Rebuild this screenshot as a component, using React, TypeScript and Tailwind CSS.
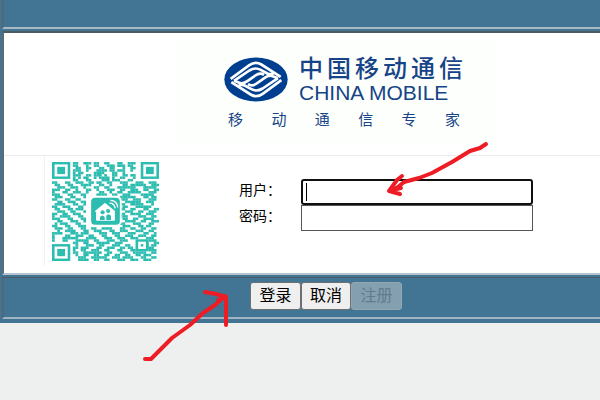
const qrRows = [
  "00000000110011101100110001100111000000000",
  "00000000110001001100011101110110000000000",
  "00000000011001100011001100010011000000000",
  "00000000111001000111101101110010000000000",
  "00000000101100001111000110010000000000000",
  "00000000111001101110100110011011000000000",
  "00000000101011001011110100110001000000000",
  "00000000110001100001110111000110000000000",
  "11000110011100110110011000111000111001110",
  "01100011000111100011001000011011111100111",
  "00111001110010001100110001111111000111110",
  "11100110010001100100011100110011100110011",
  "10001100111001000011001001100111110001110",
  "11100011000110000111100110011100001111100",
  "01110001100010000000000000111111000110110",
  "11000110011000000000000000111001110001110",
  "00110011100110000000000000001111110011100",
  "01111000110010000000000000110011111000100",
  "11001110001100000000000000011000111111000",
  "01100011011100000000000000110011000110011",
  "00111001100010000000000000001110011001110",
  "11001100111000000000000000110011110011100",
  "10011110001100000000000000111000011100110",
  "11100011000110000000000000011001100111100",
  "00110001110010000000000000001111001100111",
  "01011100011000000000000000110001110001100",
  "11000110001110000000000000011100011011000",
  "01110011000110011001111000110011001100110",
  "00100111100011001110001100111000111001100",
  "11110001110111000011100111000111000110010",
  "10000110011100110001100011001110011100110",
  "10001111110001111000111001110011100011100",
  "10001100011111001100011100111000000001110",
  "00000000110011000111110011100000000010011",
  "00000000010001110011000111001100000010110",
  "00000000110111000110011100110110000011100",
  "00000000100110011100110001100011000001110",
  "00000000110011111110011000111001111100110",
  "00000000010011001100110011001100110111000",
  "00000000001110011111100111011110001100110",
  "00000000001111001100110001110011100111000",
];

const finders = [
  [0, 0],
  [34, 0],
  [0, 34],
];

function QrCode() {
  return (
    <svg
      viewBox="0 0 41 41"
      preserveAspectRatio="none"
      className="w-[107px] h-[99px]"
      fill="#2dbdb0"
      role="img"
    >
      {qrRows.map((row, y) =>
        row.split("").map((cell, x) =>
          cell === "1" ? (
            <rect key={x + "-" + y} x={x} y={y} width="1.05" height="1.05" />
          ) : null
        )
      )}
      {finders.map(([x, y]) => (
        <g key={x + "-" + y}>
          <rect x={x} y={y} width="7" height="7" />
          <rect x={x + 1} y={y + 1} width="5" height="5" fill="#fff" />
          <rect x={x + 2} y={y + 2} width="3" height="3" />
        </g>
      ))}
      <rect x="32" y="32" width="5" height="5" />
      <rect x="33" y="33" width="3" height="3" fill="#fff" />
      <rect x="34" y="34" width="1" height="1" />
      <rect x="14.3" y="14" width="12.4" height="12.6" rx="2" fill="#fff" />
      <rect x="15" y="14.8" width="11" height="11.2" rx="1.6" />
      <path
        d="M16.8 20.4 L20.3 17.3 L23.8 20.4 V24 H17.2 V20.4 Z"
        fill="#fff"
        stroke="#fff"
        strokeWidth="0.6"
        strokeLinejoin="round"
      />
      <circle cx="19.4" cy="20.8" r="0.8" />
      <circle cx="21.5" cy="20.3" r="0.8" />
      <path d="M18.4 24 V22.8 Q19.3 21.5 20.2 22.8 V24 Z M20.8 24 V22.3 Q21.6 21 22.6 22.3 V24 Z" />
      <path
        d="M22 17 Q24 17 24.2 19.2 M22.4 15.9 Q25 16 25.2 18.8"
        fill="none"
        stroke="#fff"
        strokeWidth="0.5"
      />
    </svg>
  );
}

function Logo() {
  return (
    <svg viewBox="14 21 192 134" className="w-16 h-[45px]" role="img">
      <ellipse cx="110" cy="88" rx="95" ry="66" fill="#003f8f" />
      <g fill="none" stroke="#fff" strokeWidth="8">
        <path d="M34 86 L90 45 Q108 32 126 43 L184 80" />
        <path d="M186 90 L130 131 Q112 144 94 133 L36 96" />
        <path d="M44 92 L90 61 Q108 50 124 59 L144 70 Q154 75 164 68" />
        <path d="M176 84 L130 115 Q112 126 96 117 L76 106 Q66 101 56 108" />
        <path d="M44 92 L60 98 Q72 102 84 93 L108 76 Q122 66 134 74" />
        <path d="M176 84 L160 78 Q148 74 136 83 L112 100 Q98 110 86 102" />
      </g>
    </svg>
  );
}

function Arrows() {
  return (
    <svg
      viewBox="0 0 600 400"
      className="absolute left-0 top-0 w-[600px] h-[400px] pointer-events-none"
      fill="none"
      stroke="#ee1c24"
      strokeWidth="4"
      strokeLinecap="round"
      strokeLinejoin="round"
    >
      <path d="M486 144 L480 148 L470 151 L452 162 L432 173 L419 178 L404 182 L398 187 L390 191" />
      <path d="M402 176 L397 180 L389 191 L400 194 M392 190 L401 188" />
      <path d="M145 359 L151 359 L160 350 L172 338 L190 325 L203 313 L215 305 L225 296" />
      <path d="M205 292 L216 294 L226 297 L226 325 M218 300 L226 297" />
    </svg>
  );
}

export default function LoginPage() {
  const company = ["中", "国", "移", "动", "通", "信"];
  const slogan = ["移", "动", "通", "信", "专", "家"];
  return (
    <div className="relative min-h-screen bg-[#edf0ee] font-['Liberation_Sans','Noto_Sans_CJK_SC',sans-serif] text-black overflow-hidden">
      <div className="bg-[#427594] pl-0.5 pb-1 flex flex-col gap-0.5">
        <div className="h-[29px] border-l-2 border-b-2 border-l-[#526877] border-b-[#a9b8c1]"></div>
        <div className="bg-white border-t-2 border-l-2 border-b-2 border-t-[#4d5c64] border-l-[#5d6a72] border-b-[#b4c3cf]">
          <div className="pl-[68px] pt-[9px] pb-[9px] flex justify-center border-b border-[#ececec]">
            <div className="w-80 h-[104px] bg-[#fdfffc] pl-12 pt-[15px] text-[#164487]">
              <div className="flex items-start gap-[11px] h-[53px]">
                <Logo />
                <div className="w-[164px] whitespace-nowrap">
                  <h1 className="flex justify-between text-2xl leading-6 font-medium">
                    {company.map((item) => (
                      <span key={item}>{item}</span>
                    ))}
                  </h1>
                  <p className="text-[21px] leading-6">CHINA MOBILE</p>
                </div>
              </div>
              <div className="w-[232px] ml-1 flex justify-between text-[15px] leading-5">
                {slogan.map((item) => (
                  <span key={item}>{item}</span>
                ))}
              </div>
            </div>
          </div>
          <div className="flex items-start h-[117px]">
            <div className="ml-10 w-[120px] h-[110px] pl-[7px] pt-1.5 border-l border-[#eef0fa] shrink-0">
              <QrCode />
            </div>
            <form className="ml-[75px] mt-[23px] text-sm">
              <div className="flex items-start">
                <label htmlFor="user" className="w-[62px] leading-[22px]">
                  用户：
                </label>
                <div className="relative">
                  <input
                    id="user"
                    type="text"
                    className="block w-[232px] h-[26px] px-1 border-2 border-[#101010] rounded-[3px] bg-white outline-none"
                  />
                  <span className="absolute left-[5px] top-1 w-px h-[18px] bg-black"></span>
                </div>
              </div>
              <div className="flex items-start">
                <label htmlFor="password" className="w-[62px] leading-[22px]">
                  密码：
                </label>
                <input
                  id="password"
                  type="password"
                  className="block w-[232px] h-[26px] px-1 border border-[#555] bg-white outline-none"
                />
              </div>
            </form>
          </div>
        </div>
        <div className="h-[42px] pl-12 pt-1 border-t border-l-2 border-b-2 border-t-[#4b5c68] border-l-[#526877] border-b-[#a0b4c2] flex items-start justify-center text-base">
          <button className="w-[51px] h-7 border border-[#6f6f6f] rounded-[3px] bg-[#efefef]">
            登录
          </button>
          <button className="w-[50px] h-7 border border-[#6f6f6f] rounded-[3px] bg-[#efefef]">
            取消
          </button>
          <button
            disabled
            className="w-[51px] h-7 border border-[#91a6b3] rounded-[3px] bg-[#849fb0] text-[#617c8d]"
          >
            注册
          </button>
        </div>
      </div>
      <Arrows />
    </div>
  );
}
